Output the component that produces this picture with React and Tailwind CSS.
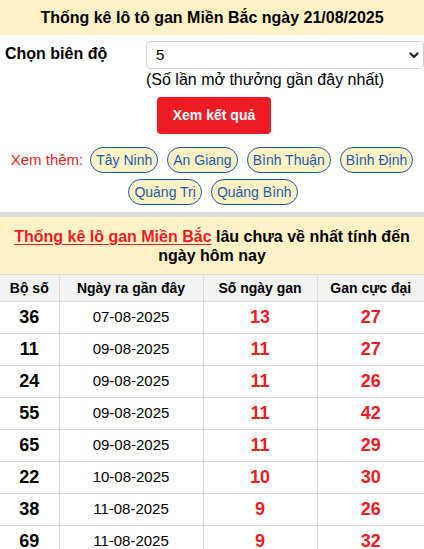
export default function App() {
  const rows = [
    ["36", "07-08-2025", "13", "27"],
    ["11", "09-08-2025", "11", "27"],
    ["24", "09-08-2025", "11", "26"],
    ["55", "09-08-2025", "11", "42"],
    ["65", "09-08-2025", "11", "29"],
    ["22", "10-08-2025", "10", "30"],
    ["38", "11-08-2025", "9", "26"],
    ["69", "11-08-2025", "9", "32"],
  ];
  const pills1 = ["Tây Ninh", "An Giang", "Bình Thuận", "Bình Định"];
  const pills2 = ["Quảng Trị", "Quảng Bình"];
  const pill = "h-[26px] px-[5px] rounded-[13px] border border-[#1c5ca6] bg-[#fff2c6] text-[#1c5ca6] text-[14px] flex items-center leading-none whitespace-nowrap shrink-0";
  return (
    <div className="w-[424px] bg-white font-['Liberation_Sans',Arial,sans-serif] text-black">
      <div className="h-[35px] bg-[#fff2c6] flex items-center justify-center text-[16px] font-bold">
        Thống kê lô tô gan Miền Bắc ngày 21/08/2025
      </div>
      <div className="flex pt-[6px]">
        <div className="w-[146px] pl-[5px] pt-[1px] text-[16px] font-bold">Chọn biên độ</div>
        <div className="flex-1 flex flex-col">
          <div className="h-[28px] border border-[#cfcfcf] rounded-[4px] flex items-center justify-between pl-[9px] pr-[3px] text-[15px]">
            <span>5</span>
            <svg width="12" height="12" viewBox="0 0 12 12">
              <path d="M2.5 4.5 L6 8 L9.5 4.5" fill="none" stroke="#222" strokeWidth="2.2" strokeLinecap="round" strokeLinejoin="round" />
            </svg>
          </div>
          <div className="text-[16px] leading-[20px] mt-[1px]">(Số lần mở thưởng gần đây nhất)</div>
        </div>
      </div>
      <div className="flex justify-center pt-[7px] pl-[4px]">
        <div className="w-[114px] h-[37px] bg-[#ee1c25] rounded-[4px] flex items-center justify-center text-white font-bold text-[14px]">
          Xem kết quả
        </div>
      </div>
      <div className="flex justify-center items-center gap-[9px] mt-[13px] whitespace-nowrap">
        <span className="text-[#ee1c25] text-[15px] mr-[-2px]">Xem thêm:</span>
        {pills1.map((p) => (
          <span key={p} className={pill}>{p}</span>
        ))}
      </div>
      <div className="flex justify-center items-center gap-[9px] mt-[6px] pl-[2px]">
        {pills2.map((p) => (
          <span key={p} className={pill}>{p}</span>
        ))}
      </div>
      <div className="h-[5px] bg-[#dcdcdc] mt-[7px]"></div>
      <div className="bg-[#fff2c6] px-[8px] pt-[10px] pb-[9px] text-center text-[16px] font-bold leading-[19px]">
        <span className="text-[#ee1c25] underline underline-offset-[2px]">Thống kê lô gan Miền Bắc</span> lâu chưa về nhất tính đến ngày hôm nay
      </div>
      <table className="w-full border-collapse">
        <thead>
          <tr className="bg-[#f2f2f2] h-[27px] text-[14px] font-bold">
            <th className="w-[59px] border border-[#dadada] border-l-0 font-bold">Bộ số</th>
            <th className="w-[144px] border border-[#dadada] font-bold">Ngày ra gần đây</th>
            <th className="w-[114px] border border-[#dadada] font-bold">Số ngày gan</th>
            <th className="border border-[#dadada] border-r-0 font-bold">Gan cực đại</th>
          </tr>
        </thead>
        <tbody>
          {rows.map((r, i) => (
            <tr key={i} className="h-[32px] text-center">
              <td className="border border-[#dadada] border-l-0 text-[18px] font-bold">{r[0]}</td>
              <td className="border border-[#dadada] text-[15px]">{r[1]}</td>
              <td className="border border-[#dadada] text-[18px] font-bold text-[#ee1c25]">{r[2]}</td>
              <td className="border border-[#dadada] border-r-0 text-[18px] font-bold text-[#ee1c25]">{r[3]}</td>
            </tr>
          ))}
        </tbody>
      </table>
    </div>
  );
}
